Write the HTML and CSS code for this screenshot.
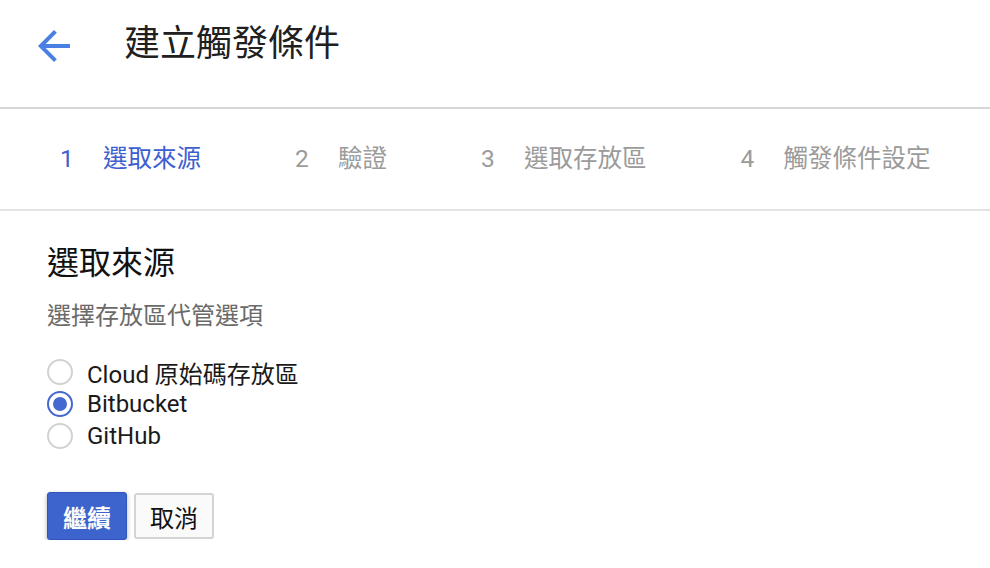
FILE: index.html
```html
<!DOCTYPE HTML>
<html>
<head>
<meta http-equiv="Content-Type" content="text/html; charset=utf-8" />
	<title>建立觸發條件</title>
<link rel="stylesheet" href="styles.css">
</head>
<body>
	<div class="header">
		<a href="#" class="back">
			<svg width="48" height="48" viewBox="0 0 24 24">
				<path d="M20 11H7.83l5.59-5.59L12 4l-8 8 8 8 1.41-1.41L7.83 13H20v-2z" fill="#4a7fe3"/>
			</svg>
		</a>
		<h1 class="title">建立觸發條件</h1>
	</div>

	<div class="stepper">
		<div class="step on"><span class="num">1</span><span class="label">選取來源</span></div>
		<div class="step"><span class="num">2</span><span class="label">驗證</span></div>
		<div class="step"><span class="num">3</span><span class="label">選取存放區</span></div>
		<div class="step"><span class="num">4</span><span class="label">觸發條件設定</span></div>
	</div>

	<div class="content">
		<h2 class="heading">選取來源</h2>
		<p class="hint">選擇存放區代管選項</p>

		<div class="options">
			<label class="option"><span class="radio"></span>Cloud 原始碼存放區</label>
			<label class="option"><span class="radio checked"></span>Bitbucket</label>
			<label class="option"><span class="radio"></span>GitHub</label>
		</div>

		<div class="buttons">
			<button class="btn primary">繼續</button>
			<button class="btn">取消</button>
		</div>
	</div>
</body>
</html>
```

FILE: styles.css
```css
*{
	margin: 0;
	padding: 0;
	box-sizing: border-box;
}
body{
	font-family: Roboto, "Noto Sans CJK TC", sans-serif;
	background: #fff;
	color: #1a1a1a;
}
.header{
	height: 109px;
	border-bottom: 2px solid #d6d6d6;
	display: flex;
	align-items: center;
	padding: 0 0 16px 30px;
}
.back{
	display: flex;
	width: 48px;
	height: 48px;
}
.title{
	font-size: 36px;
	font-weight: normal;
	line-height: 44px;
	margin: 0 0 4px 46px;
	color: #202020;
}
.stepper{
	height: 102px;
	border-bottom: 2px solid #e4e4e4;
	display: flex;
	align-items: center;
	gap: 94px;
	padding-left: 60px;
}
.step{
	display: flex;
	align-items: center;
	font-size: 24.5px;
	line-height: 32px;
	color: #9b9b9b;
}
.step .num{
	width: 43px;
}
.step.on{
	color: #3e5fd0;
}
.content{
	padding-left: 47px;
}
.heading{
	font-size: 32px;
	font-weight: normal;
	line-height: 40px;
	margin-top: 32px;
	color: #111;
}
.hint{
	font-size: 24px;
	line-height: 32px;
	margin-top: 17px;
	color: #6a6a6a;
}
.options{
	margin-top: 24px;
	display: flex;
	flex-direction: column;
}
.option{
	display: flex;
	align-items: center;
	height: 32px;
	font-size: 24px;
	color: #1a1a1a;
}
.radio{
	width: 26px;
	height: 26px;
	border: 2px solid #d2d2d2;
	border-radius: 50%;
	margin-right: 14px;
	display: flex;
	align-items: center;
	justify-content: center;
}
.radio.checked{
	border-color: #4468d0;
}
.radio.checked::after{
	content: "";
	width: 14px;
	height: 14px;
	border-radius: 50%;
	background: #4468d0;
}
.buttons{
	margin-top: 40px;
	display: flex;
	align-items: center;
	gap: 7px;
}
.btn{
	font-family: Roboto, "Noto Sans CJK TC", sans-serif;
	font-size: 24px;
	width: 80px;
	height: 46px;
	border: 2px solid #d4d4d4;
	border-radius: 3px;
	background: #fafafa;
	color: #111;
}
.btn.primary{
	height: 48px;
	background: #3d63cc;
	border: 1px solid #2f55bd;
	color: #fff;
	font-weight: bold;
	box-shadow: 0 2px 5px rgba(0,0,0,0.3);
}
```
